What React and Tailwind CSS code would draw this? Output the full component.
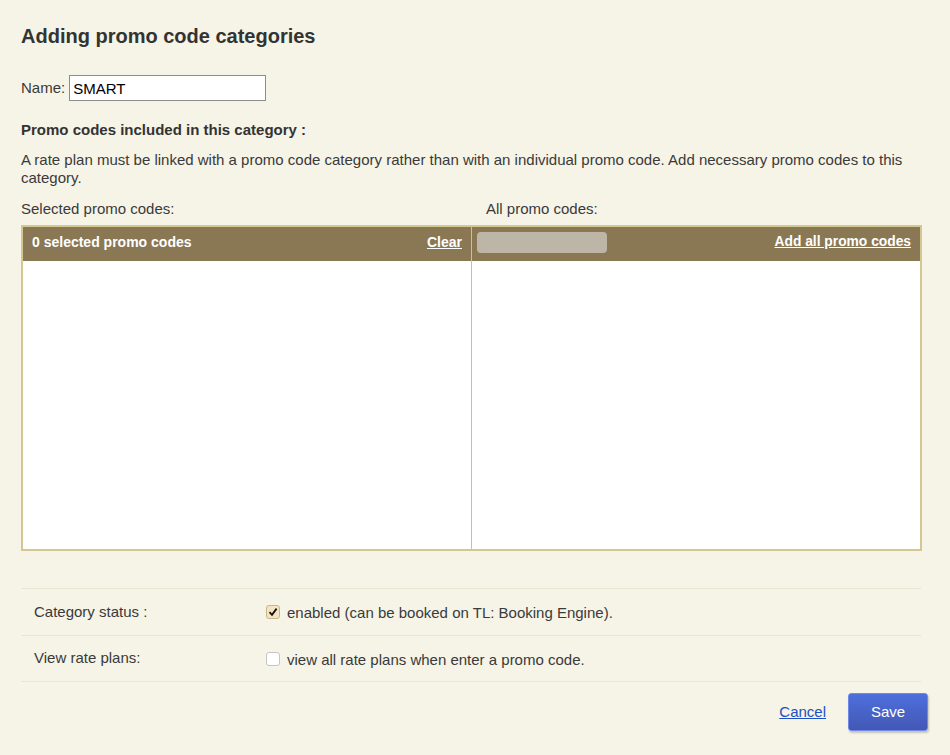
import React, { useState } from "react";

function Check({ checked, onClick }) {
  return (
    <span
      onClick={onClick}
      className={
        "mr-[7px] flex h-[14px] w-[14px] items-center justify-center rounded-[3px] border " +
        (checked ? "border-[#c9b68a] bg-[#f4e4c1]" : "border-[#c4c4c4] bg-white")
      }
    >
      {checked && (
        <svg width="10" height="10" viewBox="0 0 10 10">
          <path d="M1.5 5.2 L4 7.8 L8.6 1.6" fill="none" stroke="#111" strokeWidth="1.8" />
        </svg>
      )}
    </span>
  );
}

export default function App() {
  const [name, setName] = useState("SMART");
  const [enabled, setEnabled] = useState(true);
  const [viewAll, setViewAll] = useState(false);

  return (
    <div
      className="min-h-[755px] bg-[#f6f4e7] pl-[21px] pr-[28px] pt-[24px] text-[15px] text-[#3a3a3a]"
      style={{ fontFamily: '"Liberation Sans", Arial, sans-serif' }}
    >
      <h1 className="text-[20px] font-bold leading-[24px] text-[#333]">
        Adding promo code categories
      </h1>

      {/* name field */}
      <div className="mt-[27px] flex items-center">
        <label className="mr-[4px] leading-[18px]">Name:</label>
        <input
          value={name}
          onChange={(e) => setName(e.target.value)}
          className="h-[26px] w-[197px] border border-[#8d8d8d] bg-white px-[3px] text-[15px] text-black outline-none"
        />
      </div>

      <h2 className="mt-[20px] text-[15px] font-bold leading-[18px] text-[#333]">
        Promo codes included in this category :
      </h2>
      <p className="mt-[12px] max-w-[910px] leading-[18px]">
        A rate plan must be linked with a promo code category rather than with an individual promo
        code. Add necessary promo codes to this category.
      </p>

      <div className="mt-[13px] flex leading-[18px]">
        <div className="w-[465px]">Selected promo codes:</div>
        <div>All promo codes:</div>
      </div>

      {/* promo code picker */}
      <div className="mt-[7px] w-[901px] border-2 border-[#d3c792]">
        <div className="flex h-[322px]">
          <div className="flex w-[448px] flex-col">
            <div className="flex h-[34px] items-center justify-between bg-[#8a7855] px-[9px] pb-[4px] text-[14px] font-bold text-white">
              <span>0 selected promo codes</span>
              <a href="#" className="underline">Clear</a>
            </div>
            <div className="flex-1 bg-white"></div>
          </div>
          <div className="w-px bg-[#cdc193]"></div>
          <div className="flex flex-1 flex-col">
            <div className="flex h-[34px] items-center justify-between bg-[#8a7855] pb-[4px] pl-[5px] pr-[9px] text-[14px] font-bold text-white">
              <input className="h-[21px] w-[130px] rounded-[4px] bg-[#bdb6a6] px-2 text-[13px] outline-none" />
              <a href="#" className="text-[13.8px] underline">Add all promo codes</a>
            </div>
            <div className="flex-1 bg-white"></div>
          </div>
        </div>
      </div>

      {/* settings */}
      <div className="mt-[37px] w-[900px] border-t border-[#e9e6d3]">
        <div className="flex h-[47px] items-center border-b border-[#e9e6d3] pl-[13px]">
          <span className="w-[232px]">Category status :</span>
          <label className="flex items-center">
            <Check checked={enabled} onClick={() => setEnabled(!enabled)} />
            <span className="mt-[3px]">enabled (can be booked on TL: Booking Engine).</span>
          </label>
        </div>
        <div className="flex h-[46px] items-center border-b border-[#e9e6d3] pl-[13px]">
          <span className="w-[232px]">View rate plans:</span>
          <label className="flex items-center">
            <Check checked={viewAll} onClick={() => setViewAll(!viewAll)} />
            <span className="mt-[3px]">view all rate plans when enter a promo code.</span>
          </label>
        </div>
      </div>

      <div className="mt-[11px] flex w-[907px] items-center justify-end">
        <a href="#" className="mr-[22px] text-[15px] text-[#1c4fc4] underline">
          Cancel
        </a>
        <button className="h-[38px] w-[80px] rounded-[3px] border border-[#7088ea] bg-gradient-to-b from-[#4d6fdc] to-[#4358b5] text-[15px] text-white shadow-[1px_2px_2px_rgba(0,0,0,0.2)]">
          Save
        </button>
      </div>
    </div>
  );
}
